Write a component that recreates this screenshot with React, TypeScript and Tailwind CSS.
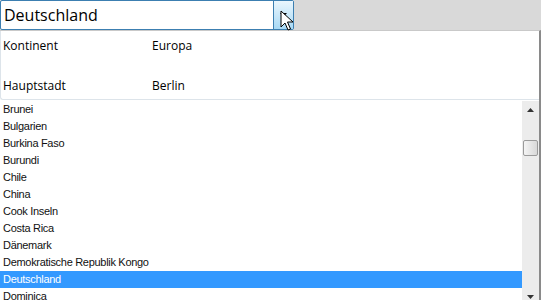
import React from "react";

const items = [
  "Brunei",
  "Bulgarien",
  "Burkina Faso",
  "Burundi",
  "Chile",
  "China",
  "Cook Inseln",
  "Costa Rica",
  "Dänemark",
  "Demokratische Republik Kongo",
  "Deutschland",
  "Dominica",
];

export default function App() {
  return (
    <div className="w-[541px] h-[300px] bg-[#d9d9d9] flex flex-col overflow-hidden relative" style={{ fontFamily: "'Liberation Sans', Arial, sans-serif" }}>
      <div className="h-[31px] flex">
        <div className="w-[294px] h-[30px] border border-[#3c7fb1] bg-white flex rounded-[2px]">
          <div className="flex-1 flex items-center pl-[3px] text-[16px] text-black" style={{ fontFamily: "'Open Sans', 'Noto Sans', sans-serif" }}>
            Deutschland
          </div>
          <div className="w-[20px] h-full border-l border-[#3c7fb1] bg-gradient-to-b from-[#eaf6fd] to-[#a7d9f5] flex items-center justify-center">
            <svg width="7" height="4" viewBox="0 0 7 4"><path d="M0 0h7L3.5 4z" fill="#000" /></svg>
          </div>
        </div>
      </div>
      <div className="flex-1 w-[541px] border-t border-[#c9c9c9] border-r-2 border-r-[#8a8a8a] border-b-2 border-b-[#b5b5b5] bg-white flex flex-col">
        <div className="h-[69px] border-l border-b border-[#dde4ea] rounded-bl-[3px] grid grid-cols-[151px_1fr] grid-rows-2 text-[12px] text-black" style={{ fontFamily: "'Open Sans', 'Noto Sans', sans-serif" }}>
          <div className="pl-[2px] pt-[6px]">Kontinent</div>
          <div className="pt-[6px]">Europa</div>
          <div className="pl-[2px] pt-[12px]">Hauptstadt</div>
          <div className="pt-[12px]">Berlin</div>
        </div>
        <div className="flex-1 flex min-h-0 pt-[1px]">
          <div className="flex-1 overflow-hidden">
            {items.map((it) => (
              <div
                key={it}
                className={`h-[17px] flex items-center pl-[3px] text-[11px] leading-[17px] tracking-[-0.3px] ${it === "Deutschland" ? "bg-[#3399ff] text-white" : "text-[#111]"}`}
              >
                {it}
              </div>
            ))}
          </div>
          <div className="w-[17px] bg-[#ececec] flex flex-col items-center">
            <div className="h-[17px] flex items-center justify-center">
              <svg width="7" height="4" viewBox="0 0 7 4"><path d="M3.5 0L7 4H0z" fill="#333" /></svg>
            </div>
            <div className="h-[22px]" />
            <div className="w-[15px] h-[16px] rounded-[2px] border border-[#9a9a9a] bg-gradient-to-r from-[#f4f4f4] to-[#d8d8d8]" />
            <div className="flex-1" />
            <div className="h-[17px] flex items-center justify-center">
              <svg width="7" height="4" viewBox="0 0 7 4"><path d="M0 0h7L3.5 4z" fill="#333" /></svg>
            </div>
          </div>
        </div>
      </div>
      <svg className="absolute left-[280px] top-[10px]" width="14" height="22" viewBox="0 0 14 22">
        <path d="M1 1 L1 17 L5 13 L8 20 L10.5 19 L7.5 12 L13 12 Z" fill="#fff" stroke="#000" strokeWidth="1" strokeLinejoin="round" />
      </svg>
    </div>
  );
}
